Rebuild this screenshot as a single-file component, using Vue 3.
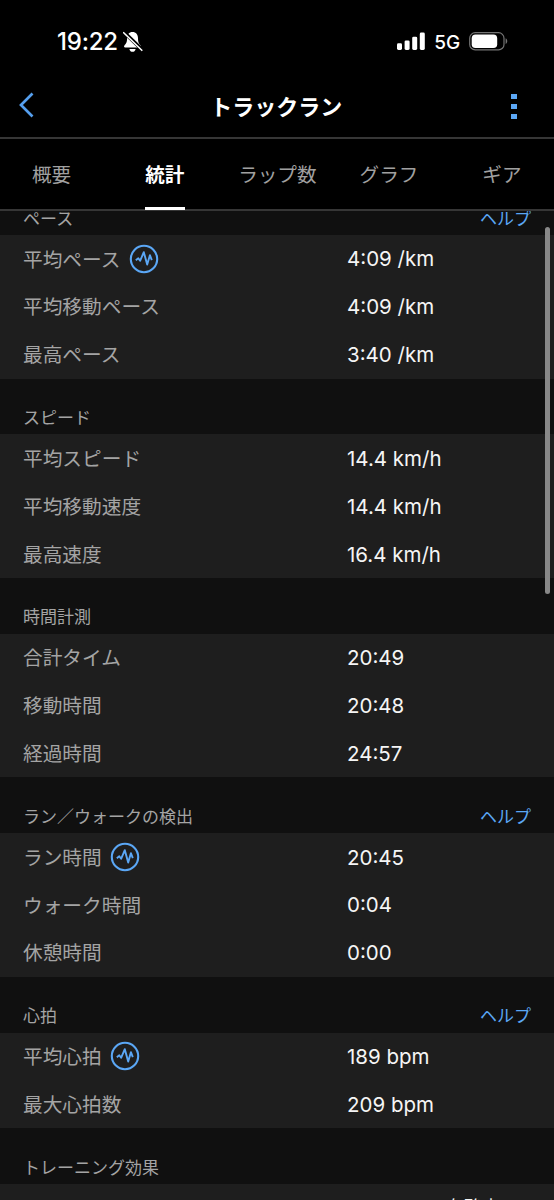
<script setup>
const tabs = [
  { label: '概要', cls: 't1' },
  { label: '統計', cls: 't2', active: true },
  { label: 'ラップ数', cls: 't3' },
  { label: 'グラフ', cls: 't4' },
  { label: 'ギア', cls: 't5' },
]
const sections = [
  { title: 'ペース', help: true, rows: [
    { label: '平均ペース', value: '4:09 /km', chart: true },
    { label: '平均移動ペース', value: '4:09 /km' },
    { label: '最高ペース', value: '3:40 /km' },
  ] },
  { title: 'スピード', rows: [
    { label: '平均スピード', value: '14.4 km/h' },
    { label: '平均移動速度', value: '14.4 km/h' },
    { label: '最高速度', value: '16.4 km/h' },
  ] },
  { title: '時間計測', rows: [
    { label: '合計タイム', value: '20:49' },
    { label: '移動時間', value: '20:48' },
    { label: '経過時間', value: '24:57' },
  ] },
  { title: 'ラン／ウォークの検出', help: true, rows: [
    { label: 'ラン時間', value: '20:45', chart: true },
    { label: 'ウォーク時間', value: '0:04' },
    { label: '休憩時間', value: '0:00' },
  ] },
  { title: '心拍', help: true, rows: [
    { label: '平均心拍', value: '189 bpm', chart: true },
    { label: '最大心拍数', value: '209 bpm' },
  ] },
]
</script>

<template>
  <div class="screen">
    <div class="status">
      <div class="clock">
        <span class="time">19:22</span>
        <svg class="bell" width="20" height="22" viewBox="0 0 20 22">
          <path d="M9.5 1C6 1 4.1 3.6 4.1 7.2C4.1 11.3 3 12.7 1.4 14.4C.7 15.3 1 16.4 2.1 16.4H17C18.2 16.4 18.4 15.3 17.6 14.4C16 12.7 15 11.3 15 7.2C15 3.6 13 1 9.5 1Z" fill="#fff" />
          <path d="M6.4 17.9H12.6C12.2 19.9 11 20.7 9.5 20.7C8 20.7 6.8 19.9 6.4 17.9Z" fill="#fff" />
          <path d="M.9 1L19 18.6" stroke="#000" stroke-width="3.6" />
          <path d="M.7 1.7L18.8 19.3" stroke="#fff" stroke-width="1.6" stroke-linecap="round" />
        </svg>
      </div>
      <div class="radio">
        <svg width="28" height="19" viewBox="0 0 28 19" fill="#fff">
          <rect x="0" y="11.3" width="5" height="6.7" rx="1.4" />
          <rect x="7.6" y="8.4" width="5" height="9.6" rx="1.4" />
          <rect x="15.2" y="4.7" width="5" height="13.3" rx="1.4" />
          <rect x="22.8" y="0.5" width="5" height="17.5" rx="1.4" />
        </svg>
        <span class="network">5G</span>
        <svg class="battery" width="39" height="19" viewBox="0 0 39 19">
          <rect x=".7" y=".7" width="34.3" height="17.2" rx="5.5" fill="none" stroke="#747474" stroke-width="1.2" />
          <rect x="2.7" y="2.6" width="25.5" height="13.4" rx="3.8" fill="#fff" />
          <path d="M36.6 6.3C38.8 7.4 38.8 11 36.6 12.1Z" fill="#747474" />
        </svg>
      </div>
    </div>

    <header class="header">
      <svg class="back" width="16" height="26" viewBox="0 0 16 26">
        <path d="M13.5 1.5L2 13L13.5 24.5" fill="none" stroke="#559fee" stroke-width="2.7" />
      </svg>
      <h1>トラックラン</h1>
      <div class="more"><i></i><i></i><i></i></div>
    </header>

    <nav class="tabs">
      <span v-for="t in tabs" :key="t.label" class="tab" :class="[t.cls, { active: t.active }]">{{ t.label }}</span>
    </nav>

    <main class="content">
      <section v-for="s in sections" :key="s.title">
        <div class="heading">
          <span>{{ s.title }}</span>
          <span v-if="s.help" class="help">ヘルプ</span>
        </div>
        <div class="rows">
          <div v-for="r in s.rows" :key="r.label" class="row">
            <div class="label">
              <span>{{ r.label }}</span>
              <svg v-if="r.chart" class="chart" width="30" height="30" viewBox="0 0 30 30" fill="none" stroke="#5ba7f5">
                <circle cx="15" cy="15" r="13.2" stroke-width="2.1" />
                <path d="M6.8 16.2L9.3 14.3L11.1 16.8L14.8 8.2L18.2 20.6L20.9 11.2L22.8 16.2" stroke-width="1.9" stroke-linejoin="round" />
              </svg>
            </div>
            <div class="value">{{ r.value }}</div>
          </div>
        </div>
      </section>
      <section>
        <div class="heading"><span>トレーニング効果</span></div>
        <div class="rows last"><span>有酸素</span></div>
      </section>
      <div class="scrollbar"></div>
    </main>
  </div>
</template>

<style>
body { margin: 0; background: #000; }
</style>

<style scoped>
.screen {
  width: 554px;
  height: 1200px;
  background: #000;
  color: #fff;
  font-family: Inter, "Noto Sans CJK JP", sans-serif;
  display: flex;
  flex-direction: column;
  overflow: hidden;
}
.status {
  height: 74px;
  box-sizing: border-box;
  padding: 8px 46px 0 57px;
  display: flex;
  align-items: center;
  justify-content: space-between;
  flex: none;
}
.clock, .radio { display: flex; align-items: center; }
.time { font-size: 24px; font-weight: 550; letter-spacing: -0.2px; }
.bell { margin: 1px 0 0 5px; }
.network { font-size: 19px; font-weight: 450; margin: 2px 9px 0 9px; letter-spacing: -0.1px; }
.header {
  height: 65px;
  box-sizing: border-box;
  border-bottom: 2px solid #363636;
  padding: 0 37px 0 19px;
  display: flex;
  align-items: center;
  justify-content: space-between;
  flex: none;
}
.back { margin-top: -2px; }
h1 { margin: 2px 0 0 6px; font-size: 22px; font-weight: 700; line-height: 30px; }
.more { display: grid; gap: 4.5px; margin-top: 2px; }
.more i { width: 5.5px; height: 5.5px; background: #5ba7f5; }
.tabs {
  height: 72px;
  box-sizing: border-box;
  border-bottom: 2px solid #363636;
  display: flex;
  padding-left: 32px;
  flex: none;
}
.tab {
  font-size: 19.6px;
  line-height: 72px;
  height: 71px;
  color: #a0a0a0;
  white-space: nowrap;
  box-sizing: border-box;
}
.active { color: #fff; font-weight: 700; border-bottom: 3px solid #fff; }
.t2 { margin-left: 74px; width: 40px; }
.t3 { margin-left: 53px; }
.t4 { margin-left: 43px; }
.t5 { margin-left: 64px; }
.content {
  position: relative;
  flex: 1;
  min-height: 0;
  overflow: hidden;
  background: #101010;
}
section:first-child { margin-top: -31.8px; }
.heading {
  height: 55.8px;
  box-sizing: border-box;
  padding: 22.4px 23px 0;
  display: flex;
  justify-content: space-between;
  font-size: 17px;
  line-height: 34px;
  color: #a4a4a4;
}
.help { color: #5ba7f5; }
.rows { background: #1e1e1e; }
.row { height: 47.86px; display: flex; align-items: center; padding-left: 23px; }
.label {
  width: 324px;
  display: flex;
  align-items: center;
  font-size: 19.7px;
  line-height: 30px;
  color: #a4a4a4;
}
.label span { padding-top: 1.2px; }
.chart { margin-left: 8.5px; }
.value { padding-top: 1px; font-size: 20.5px; line-height: 30px; color: #f5f5f5; }
.last { height: 60px; padding: 12px 0 0 446px; font-size: 18px; line-height: 24px; color: #f5f5f5; box-sizing: border-box; }
.scrollbar {
  position: absolute;
  right: 4px;
  top: 16px;
  width: 5px;
  height: 367px;
  border-radius: 3px;
  background: #888;
}
</style>
